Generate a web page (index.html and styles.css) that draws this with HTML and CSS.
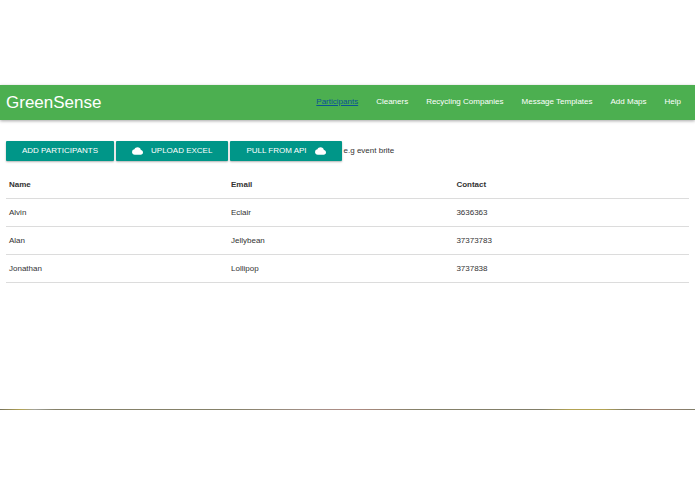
FILE: index.html
```html
<!DOCTYPE html>
<html lang="en">
<head>
  <meta charset="utf-8">
  <title>GreenSense</title>
  <link rel="stylesheet" href="styles.css">
</head>
<body>
  <header class="navbar">
    <a class="brand" href="#">GreenSense</a>
    <nav class="links">
      <a class="current" href="#">Participants</a>
      <a href="#">Cleaners</a>
      <a href="#">Recycling Companies</a>
      <a href="#">Message Templates</a>
      <a href="#">Add Maps</a>
      <a href="#">Help</a>
    </nav>
  </header>
  <main class="content">
    <div class="actions">
      <button class="btn" type="button">ADD PARTICIPANTS</button>
      <button class="btn" type="button">
        <svg class="cloud" viewBox="0 4 24 16"><path d="M19.35 10.04A7.49 7.49 0 0 0 12 4C9.11 4 6.6 5.64 5.35 8.04A5.99 5.99 0 0 0 0 14c0 3.31 2.69 6 6 6h13c2.76 0 5-2.24 5-5 0-2.64-2.05-4.78-4.65-4.96z"/></svg>
        UPLOAD EXCEL
      </button>
      <button class="btn" type="button">
        PULL FROM API
        <svg class="cloud" viewBox="0 4 24 16"><path d="M19.35 10.04A7.49 7.49 0 0 0 12 4C9.11 4 6.6 5.64 5.35 8.04A5.99 5.99 0 0 0 0 14c0 3.31 2.69 6 6 6h13c2.76 0 5-2.24 5-5 0-2.64-2.05-4.78-4.65-4.96z"/></svg>
      </button>
      <span>e.g event brite</span>
    </div>
    <table class="people">
      <thead>
        <tr><th class="name">Name</th><th class="email">Email</th><th>Contact</th></tr>
      </thead>
      <tbody>
        <tr><td>Alvin</td><td>Eclair</td><td>3636363</td></tr>
        <tr><td>Alan</td><td>Jellybean</td><td>37373783</td></tr>
        <tr><td>Jonathan</td><td>Lollipop</td><td>3737838</td></tr>
      </tbody>
    </table>
  </main>
  <div class="strip"></div>
</body>
</html>
```
FILE: styles.css
```css
* {
  box-sizing: border-box;
}

body {
  margin: 0;
  padding-top: 85px;
  background: #fff;
  color: #333;
  font: 8px/12px "Liberation Sans", Arial, sans-serif;
}

.navbar {
  display: flex;
  align-items: center;
  justify-content: space-between;
  height: 35px;
  padding: 0 14px 0 6px;
  background: #4caf50;
  box-shadow: 0 1px 3px rgba(0, 0, 0, 0.35);
}

.navbar a {
  color: #fff;
  text-decoration: none;
}

.navbar .brand {
  font-size: 17px;
  line-height: 35px;
}

.links {
  display: flex;
  gap: 18px;
  padding-bottom: 2px;
}

.navbar .current {
  color: #0b5394;
  text-decoration: underline;
}

.content {
  min-height: 289px;
  padding: 21px 6px 0;
}

.actions {
  display: flex;
  align-items: center;
  gap: 2px;
  margin-bottom: 10px;
}

.btn {
  display: flex;
  align-items: center;
  gap: 8px;
  height: 20px;
  padding: 0 16px;
  border: 0;
  border-radius: 1px;
  background: #009688;
  color: #fff;
  font: inherit;
  box-shadow: 0 1px 2px rgba(0, 0, 0, 0.3);
}

.cloud {
  width: 11px;
  height: 8px;
  fill: #fff;
}

.people {
  width: 100%;
  table-layout: fixed;
  border-collapse: separate;
  border-spacing: 0;
}

.people th,
.people td {
  height: 28px;
  padding: 0 3px;
  border-bottom: 1px solid #dcdcdc;
  text-align: left;
}

.people .name {
  width: 222px;
}

.people .email {
  width: 33%;
}

.strip {
  height: 1px;
  background: linear-gradient(90deg, #77735c, #b3a352 3%, #a3a39a 5%, #858169 8%, #858169 33%, #a49189 45%, #b08a82 51%, #858169 60%, #817e69 78%, #b3a352 82%, #b3a352 87%, #817e69 90%, #a07f70 94%, #817e69);
}
```
